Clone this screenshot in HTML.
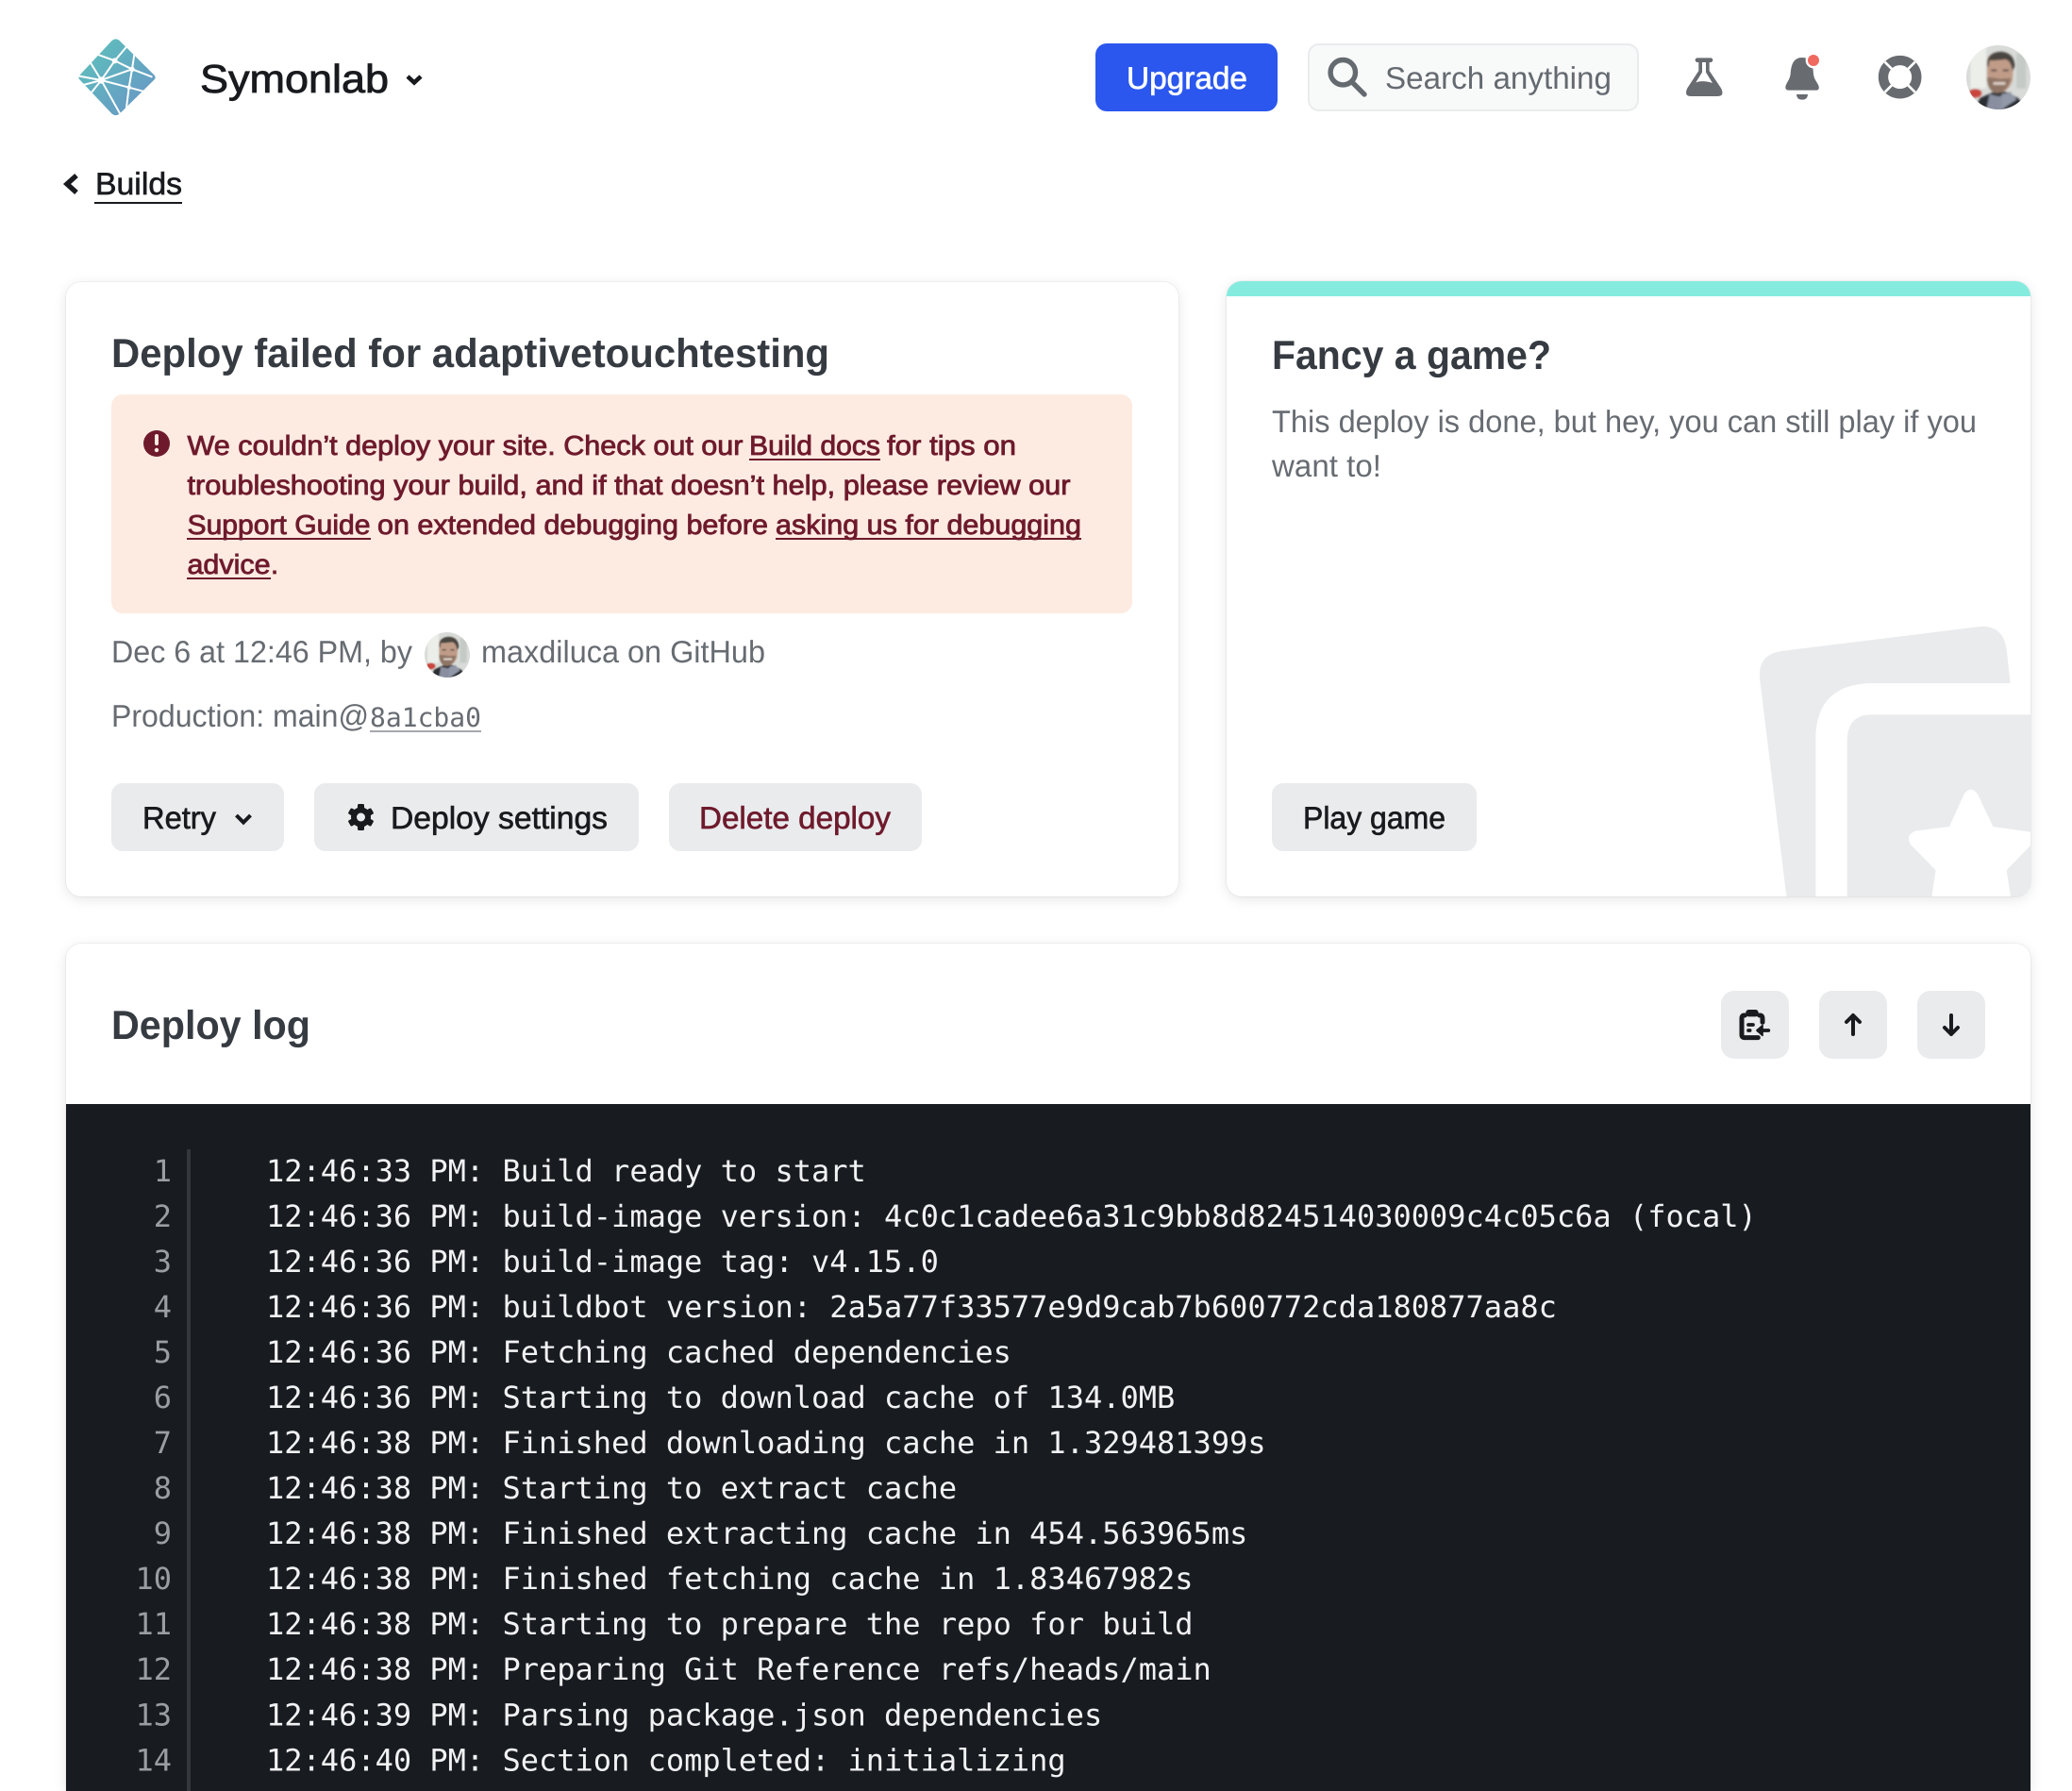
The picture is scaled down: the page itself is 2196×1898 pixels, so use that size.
<!DOCTYPE html>
<html lang="en">
<head>
<meta charset="utf-8">
<title>Deploy log</title>
<style>
html,body{margin:0;padding:0;background:#fff;width:2196px;height:1898px;overflow:hidden;}
#w{position:relative;width:2196px;height:1898px;overflow:hidden;font-family:"Liberation Sans",sans-serif;}
.card{position:absolute;background:#fff;border-radius:16px;box-shadow:0 0 0 1px rgba(0,0,0,.04),0 3px 14px rgba(0,0,0,.1);}
.box{position:absolute;}
svg.o{position:absolute;left:0;top:0;}
text{font-family:"Liberation Sans",sans-serif;text-rendering:geometricPrecision;white-space:pre;}
.m{stroke-width:.65px;stroke:currentColor;}
.s{stroke-width:.85px;stroke:currentColor;}
.b{font-weight:700;}
.mono{font-family:"DejaVu Sans Mono","Liberation Mono",monospace;}
</style>
</head>
<body>
<div id="w">
<div class="card" style="left:70px;top:299px;width:1179px;height:651px"></div>
<div class="card" style="left:1300px;top:298px;width:852px;height:652px;overflow:hidden"><div style="height:16px;background:#85ebdf"></div></div>
<div class="card" style="left:70px;top:1000px;width:2082px;height:898px;border-radius:16px 16px 0 0"></div>
<div class="box" style="left:70px;top:1170px;width:2082px;height:728px;background:#181b20"></div>

<div class="box" style="left:118px;top:418px;width:1082px;height:232px;background:#fdebe2;border-radius:12px"></div>
<div class="box" style="left:1161px;top:46px;width:193px;height:72px;background:#2b57ee;border-radius:12px"></div>
<div class="box" style="left:1386px;top:46px;width:347px;height:68px;background:#f8f9f9;border:2px solid #e9ebed;border-radius:12px"></div>

<div class="box" style="left:118px;top:830px;width:183px;height:72px;background:#e9ebed;border-radius:12px"></div>
<div class="box" style="left:333px;top:830px;width:344px;height:72px;background:#e9ebed;border-radius:12px"></div>
<div class="box" style="left:709px;top:830px;width:268px;height:72px;background:#e9ebed;border-radius:12px"></div>
<div class="box" style="left:1348px;top:830px;width:217px;height:72px;background:#e9ebed;border-radius:12px"></div>

<div class="box" style="left:1824px;top:1050px;width:72px;height:72px;background:#e9ebed;border-radius:14px"></div>
<div class="box" style="left:1928px;top:1050px;width:72px;height:72px;background:#e9ebed;border-radius:14px"></div>
<div class="box" style="left:2032px;top:1050px;width:72px;height:72px;background:#e9ebed;border-radius:14px"></div>

<svg class="o" width="2196" height="1898" viewBox="0 0 2196 1898" xmlns="http://www.w3.org/2000/svg">
<defs>
<linearGradient id="lg" x1="0" y1="0" x2="1" y2="1">
<stop offset="0" stop-color="#5cc4bb"/><stop offset="1" stop-color="#6a92c6"/>
</linearGradient>
<clipPath id="avc"><circle cx="128" cy="125" r="101"/></clipPath>
<filter id="bl" x="-20%" y="-20%" width="140%" height="140%"><feGaussianBlur stdDeviation="3"/></filter>
<g id="av">
<g clip-path="url(#avc)">
<rect x="20" y="20" width="220" height="210" fill="#d8dbd8"/>
<g filter="url(#bl)">
<rect x="40" y="30" width="50" height="130" fill="#eceeea"/>
<rect x="185" y="50" width="30" height="110" fill="#c4cac6"/>
<ellipse cx="55" cy="175" rx="20" ry="14" fill="#c9453c"/>
<path d="M50 235 L70 190 L110 172 L150 170 L190 190 L225 235Z" fill="#2c2f33"/>
<path d="M90 230 L100 178 L130 185 L165 170 L180 195 L135 230Z" fill="#8a8fa0"/>
<path d="M140 175 L175 180 L185 195 L135 228Z" fill="#9298a8"/>
<path d="M92 75 Q92 50 130 48 Q172 50 176 85 L172 135 Q160 172 125 174 Q98 170 92 130Z" fill="#c09c88"/>
<path d="M92 135 Q100 175 125 175 Q156 172 168 128 Q150 128 135 130 Q110 125 92 125Z" fill="#8f7465"/>
<path d="M112 140 H150 V148 H112Z" fill="#e2d6cc"/>
<path d="M92 85 Q92 46 135 44 Q178 46 180 90 L172 105 Q168 72 150 68 Q120 72 100 72 L96 95Z" fill="#4a443f"/>
<rect x="105" y="100" width="18" height="6" fill="#5a4a42"/>
<rect x="142" y="100" width="18" height="6" fill="#5a4a42"/>
</g>
</g>
</g>
</defs>

<!-- Logo -->
<g transform="translate(60 30) scale(.3333)">
<path d="M176 39 Q188 29 200 39 L310 148 Q318 156 310 164 L200 272 Q188 281 176 272 L74 164 Q66 156 74 148Z" fill="url(#lg)"/>
<g stroke="#fff" stroke-width="6" fill="none" stroke-linecap="round">
<path d="M135 85 L185 103 L228 52"/>
<path d="M185 103 L142 165"/>
<path d="M185 103 L240 130 L247 84"/>
<path d="M240 130 L302 154"/>
<path d="M240 130 L142 165"/>
<path d="M240 130 L230 188 L275 200"/>
<path d="M230 188 L222 252"/>
<path d="M142 165 L105 105"/>
<path d="M142 165 L72 152"/>
<path d="M142 165 L110 205"/>
<path d="M85 180 L142 165"/>
<path d="M142 165 L230 188"/>
<path d="M142 165 L202 272"/>
</g>
<g fill="#fff"><circle cx="185" cy="103" r="9"/><circle cx="240" cy="130" r="8"/><circle cx="142" cy="165" r="11"/><circle cx="230" cy="188" r="7"/></g>
</g>

<text x="212" y="98" font-size="42" fill="#181a1e" style="color:#181a1e" class="s" textLength="200" lengthAdjust="spacingAndGlyphs">Symonlab</text>
<path d="M432 81 L439 87.5 L446 81" fill="none" stroke="#181a1e" stroke-width="4.6"/>

<!-- Builds -->
<path d="M81 186 L71 195 L81 204" fill="none" stroke="#181a1e" stroke-width="5.4"/>
<text x="101" y="206" font-size="33" fill="#181a1e" style="color:#181a1e" class="m" textLength="92" lengthAdjust="spacingAndGlyphs">Builds</text>
<rect x="100" y="214" width="93" height="2" fill="#181a1e"/>

<!-- Header right -->
<text x="1194" y="94" font-size="33" fill="#fff" style="color:#fff" class="m" textLength="128" lengthAdjust="spacingAndGlyphs">Upgrade</text>
<circle cx="1423.3" cy="76.7" r="13.2" fill="none" stroke="#646a70" stroke-width="5.4"/>
<path d="M1433 87 L1446 100" stroke="#646a70" stroke-width="5.4" stroke-linecap="round"/>
<text x="1468" y="94" font-size="33" fill="#646a70" textLength="240" lengthAdjust="spacingAndGlyphs">Search anything</text>

<g transform="translate(1775 50) scale(.3333)" fill="#686c70">
<path d="M72 34 H114 a7 7 0 0 1 0 14 H110 V75 L147 130 Q160 156 135 156 H52 Q28 156 40 130 L76 75 V48 H72 a7 7 0 0 1 0-14z"/>
<path d="M87 48 V80 L67 112 Q90 104 120 114 L99 80 V48z" fill="#fff"/>
<path d="M405 33 C375 33 370 60 368 85 C366 105 352 115 352 128 Q352 137 362 137 H450 Q460 137 458 125 C455 112 443 105 441 85 C440 60 435 33 405 33Z"/>
<path d="M387 150 H423 Q422 167 405 167 Q388 167 387 150Z"/>
<circle cx="441" cy="42" r="25" fill="#fff"/>
<circle cx="441" cy="42" r="18" fill="#f0695e"/>
<circle cx="716" cy="95" r="53" fill="none" stroke="#686c70" stroke-width="31"/>
<path d="M668 47 L692 71 M764 47 L740 71 M668 143 L692 119 M764 143 L740 119" stroke="#fff" stroke-width="8"/>
</g>

<use href="#av" transform="translate(2118 82) scale(.3366) translate(-128 -125)"/>

<!-- Deploy failed card -->
<text x="118" y="389" font-size="43" class="b" fill="#363b42" textLength="761" lengthAdjust="spacingAndGlyphs">Deploy failed for adaptivetouchtesting</text>

<circle cx="166" cy="470" r="14" fill="#6e1a2c"/>
<rect x="164" y="460" width="4" height="12" rx="2" fill="#fdebe2"/>
<circle cx="166" cy="477" r="2.2" fill="#fdebe2"/>

<g font-size="29" fill="#6e1a2c" style="color:#6e1a2c">
<text class="s" x="198.500" y="482" textLength="589" lengthAdjust="spacingAndGlyphs">We couldn’t deploy your site. Check out our</text>
<text class="s" x="794" y="482" textLength="139" lengthAdjust="spacingAndGlyphs">Build docs</text>
<rect x="794" y="486" width="139" height="2"/>
<text class="s" x="940" y="482" textLength="137" lengthAdjust="spacingAndGlyphs">for tips on</text>
<text class="s" x="198.500" y="524" textLength="936" lengthAdjust="spacingAndGlyphs">troubleshooting your build, and if that doesn’t help, please review our</text>
<text class="s" x="198.500" y="566" textLength="194" lengthAdjust="spacingAndGlyphs">Support Guide</text>
<rect x="198" y="570" width="195" height="2"/>
<text class="s" x="400" y="566" textLength="414" lengthAdjust="spacingAndGlyphs">on extended debugging before</text>
<text class="s" x="822" y="566" textLength="324" lengthAdjust="spacingAndGlyphs">asking us for debugging</text>
<rect x="822" y="570" width="324" height="2"/>
<text class="s" x="198.500" y="608" textLength="88" lengthAdjust="spacingAndGlyphs">advice</text>
<rect x="198" y="612" width="89" height="2"/>
<text class="s" x="287" y="608">.</text>
</g>

<text x="118" y="702" font-size="33" fill="#676c72" textLength="319" lengthAdjust="spacingAndGlyphs">Dec 6 at 12:46 PM, by</text>
<use href="#av" transform="translate(474 694) scale(.2376) translate(-128 -125)"/>
<text x="510" y="702" font-size="33" fill="#676c72" textLength="301" lengthAdjust="spacingAndGlyphs">maxdiluca on GitHub</text>
<text x="118" y="770" font-size="33" fill="#676c72" textLength="273" lengthAdjust="spacingAndGlyphs">Production: main@</text>
<text x="392" y="770" font-size="28" class="mono" fill="#676c72" textLength="118">8a1cba0</text>
<rect x="392" y="774" width="118" height="2" fill="#a5a8ad"/>

<text x="151" y="878" font-size="33" fill="#181a1e" style="color:#181a1e" class="m" textLength="78" lengthAdjust="spacingAndGlyphs">Retry</text>
<path d="M250.500 864 L258 871.500 L265.500 864" fill="none" stroke="#181a1e" stroke-width="4"/>
<g transform="translate(382.500 866)" fill="#181a1e">
<circle r="10.500"/>
<rect x="-3.500" y="-14" width="7" height="28" rx="1.500"/>
<rect x="-3.500" y="-14" width="7" height="28" rx="1.500" transform="rotate(60)"/>
<rect x="-3.500" y="-14" width="7" height="28" rx="1.500" transform="rotate(120)"/>
<circle r="4.500" fill="#e9ebed"/>
</g>
<text x="414" y="878" font-size="33" fill="#181a1e" style="color:#181a1e" class="m" textLength="230" lengthAdjust="spacingAndGlyphs">Deploy settings</text>
<text x="741" y="878" font-size="33" fill="#6e1a2c" class="m" style="color:#6e1a2c" textLength="203" lengthAdjust="spacingAndGlyphs">Delete deploy</text>

<!-- Game card -->
<text x="1348" y="391" font-size="43" class="b" fill="#363b42" textLength="296" lengthAdjust="spacingAndGlyphs">Fancy a game?</text>
<text x="1348" y="458" font-size="33" fill="#676c72" textLength="747" lengthAdjust="spacingAndGlyphs">This deploy is done, but hey, you can still play if you</text>
<text x="1348" y="505" font-size="33" fill="#676c72" textLength="116" lengthAdjust="spacingAndGlyphs">want to!</text>

<g transform="translate(1780 640) scale(.3333)">
<path fill="#e9ebed" d="M255 235 Q250 160 325 150 L955 72 Q1030 68 1040 145 L1052 252 H610 Q433 256 433 430 V930 H340Z"/>
<path fill="#e9ebed" d="M533 430 Q537 352 610 352 H1116 V890 Q1112 925 1075 930 H533Z"/>
<path fill="#fff" d="M905 605 Q927 575 948 605 L997 708 L1116 725 V768 L1040 847 L1053 930 H802 L815 847 L735 765 Q718 735 750 722 L858 708Z"/>
</g>
<text x="1381" y="878" font-size="33" fill="#181a1e" style="color:#181a1e" class="m" textLength="151" lengthAdjust="spacingAndGlyphs">Play game</text>

<!-- Deploy log header -->
<text x="118" y="1101" font-size="43" class="b" fill="#363b42" textLength="211" lengthAdjust="spacingAndGlyphs">Deploy log</text>

<g transform="translate(1780 1030) scale(.3333)" fill="none" stroke="#181a1e" stroke-linecap="round" stroke-linejoin="round">
<path d="M208 138 H206 Q198 138 198 147 V200 Q198 209 207 209 H250" stroke-width="15"/>
<path d="M254 138 H256 Q264 138 264 148 V160" stroke-width="15"/>
<rect x="211" y="120" width="40" height="22" rx="9" fill="#181a1e" stroke="none"/>
<path d="M219 168 H234" stroke-width="11"/>
<path d="M219 186 H224" stroke-width="11"/>
<path d="M283 186 H250" stroke-width="11"/>
<path d="M264 170 L246 186 L264 202Z" fill="#181a1e" stroke-width="5"/>
<path d="M552 198 V138 M531 159 L552 138 L573 159" stroke-width="12"/>
<path d="M864 138 V198 M843 177 L864 198 L885 177" stroke-width="12"/>
</g>

<!-- Log -->
<rect x="198" y="1218" width="4" height="680" fill="#33383e"/>
<g font-size="32" fill="#9a9ea3" text-anchor="end">
<text class="mono" x="182" y="1252">1</text>
<text class="mono" x="182" y="1300">2</text>
<text class="mono" x="182" y="1348">3</text>
<text class="mono" x="182" y="1396">4</text>
<text class="mono" x="182" y="1444">5</text>
<text class="mono" x="182" y="1492">6</text>
<text class="mono" x="182" y="1540">7</text>
<text class="mono" x="182" y="1588">8</text>
<text class="mono" x="182" y="1636">9</text>
<text class="mono" x="182" y="1684">10</text>
<text class="mono" x="182" y="1732">11</text>
<text class="mono" x="182" y="1780">12</text>
<text class="mono" x="182" y="1828.500">13</text>
<text class="mono" x="182" y="1876.500">14</text>
</g>
<g font-size="32" fill="#f1f2f3">
<text class="mono" x="282" y="1252">12:46:33 PM: Build ready to start</text>
<text class="mono" x="282" y="1300">12:46:36 PM: build-image version: 4c0c1cadee6a31c9bb8d824514030009c4c05c6a (focal)</text>
<text class="mono" x="282" y="1348">12:46:36 PM: build-image tag: v4.15.0</text>
<text class="mono" x="282" y="1396">12:46:36 PM: buildbot version: 2a5a77f33577e9d9cab7b600772cda180877aa8c</text>
<text class="mono" x="282" y="1444">12:46:36 PM: Fetching cached dependencies</text>
<text class="mono" x="282" y="1492">12:46:36 PM: Starting to download cache of 134.0MB</text>
<text class="mono" x="282" y="1540">12:46:38 PM: Finished downloading cache in 1.329481399s</text>
<text class="mono" x="282" y="1588">12:46:38 PM: Starting to extract cache</text>
<text class="mono" x="282" y="1636">12:46:38 PM: Finished extracting cache in 454.563965ms</text>
<text class="mono" x="282" y="1684">12:46:38 PM: Finished fetching cache in 1.83467982s</text>
<text class="mono" x="282" y="1732">12:46:38 PM: Starting to prepare the repo for build</text>
<text class="mono" x="282" y="1780">12:46:38 PM: Preparing Git Reference refs/heads/main</text>
<text class="mono" x="282" y="1828.500">12:46:39 PM: Parsing package.json dependencies</text>
<text class="mono" x="282" y="1876.500">12:46:40 PM: Section completed: initializing</text>
</g>
</svg>
</div>
</body>
</html>
